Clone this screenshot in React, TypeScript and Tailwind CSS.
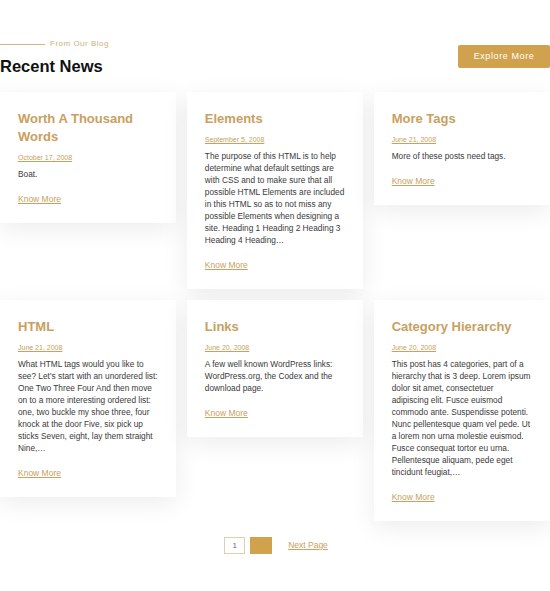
import React from "react";

type Post = {
  title: string;
  date: string;
  excerpt: string;
};

const posts: Post[] = [
  { title: "Worth A Thousand Words", date: "October 17, 2008", excerpt: "Boat." },
  {
    title: "Elements",
    date: "September 5, 2008",
    excerpt:
      "The purpose of this HTML is to help determine what default settings are with CSS and to make sure that all possible HTML Elements are included in this HTML so as to not miss any possible Elements when designing a site. Heading 1 Heading 2 Heading 3 Heading 4 Heading…",
  },
  { title: "More Tags", date: "June 21, 2008", excerpt: "More of these posts need tags." },
  {
    title: "HTML",
    date: "June 21, 2008",
    excerpt:
      "What HTML tags would you like to see? Let’s start with an unordered list: One Two Three Four And then move on to a more interesting ordered list: one, two buckle my shoe three, four knock at the door Five, six pick up sticks Seven, eight, lay them straight Nine,…",
  },
  {
    title: "Links",
    date: "June 20, 2008",
    excerpt: "A few well known WordPress links: WordPress.org, the Codex and the download page.",
  },
  {
    title: "Category Hierarchy",
    date: "June 20, 2008",
    excerpt:
      "This post has 4 categories, part of a hierarchy that is 3 deep. Lorem ipsum dolor sit amet, consectetuer adipiscing elit. Fusce euismod commodo ante. Suspendisse potenti. Nunc pellentesque quam vel pede. Ut a lorem non urna molestie euismod. Fusce consequat tortor eu urna. Pellentesque aliquam, pede eget tincidunt feugiat,…",
  },
];

const PostCard = ({ post }: { post: Post }) => (
  <div className="bg-white pl-[18px] pr-[18px] pt-[18px] pb-[18px] shadow-[0_6px_24px_rgba(0,0,0,0.08)]">
    <h3 className="text-[13px] leading-[18px] font-bold text-[#c9a060]">{post.title}</h3>
    <a className="block mt-[7px] text-[7px] leading-[10px] text-[#c9a060] underline">{post.date}</a>
    <p className="mt-[5px] text-[8.3px] leading-[12px] text-[#3a3a3a]">{post.excerpt}</p>
    <a className="block mt-[13px] text-[8.5px] leading-[12px] text-[#c9a060] underline">Know More</a>
  </div>
);

export default function App() {
  return (
    <div className="w-[550px] min-h-[591px] bg-white pt-[38px] font-['Liberation_Sans',Arial,sans-serif]">
      <div className="flex items-start justify-between">
        <div>
          <div className="flex items-center gap-[5px]">
            <span className="block w-[45px] h-px bg-[#cfb57c]" />
            <span className="text-[8px] leading-[12px] tracking-[0.5px] text-[#c9b27a]">From Our Blog</span>
          </div>
          <h2 className="mt-[5px] text-[16.5px] leading-[22px] font-bold text-[#111]">Recent News</h2>
        </div>
        <button className="mt-[7px] w-[92px] h-[23px] rounded-[2px] bg-[#d0a24e] text-[9px] tracking-[0.6px] text-white">
          Explore More
        </button>
      </div>

      <div className="mt-[15px] grid grid-cols-3 gap-x-[10.5px] gap-y-[11px] items-start">
        {posts.map((p) => (
          <PostCard key={p.title} post={p} />
        ))}
      </div>

      <div className="mt-[16px] flex items-center justify-center gap-[5px] pl-[2px]">
        <span className="w-[21px] h-[17px] border border-[#ddd0ae] flex items-center justify-center text-[8px] text-[#666]">
          1
        </span>
        <span className="w-[22px] h-[17px] bg-[#d0a24e]" />
        <a className="ml-[11px] text-[8.5px] text-[#c9a060] underline">Next Page</a>
      </div>
    </div>
  );
}
